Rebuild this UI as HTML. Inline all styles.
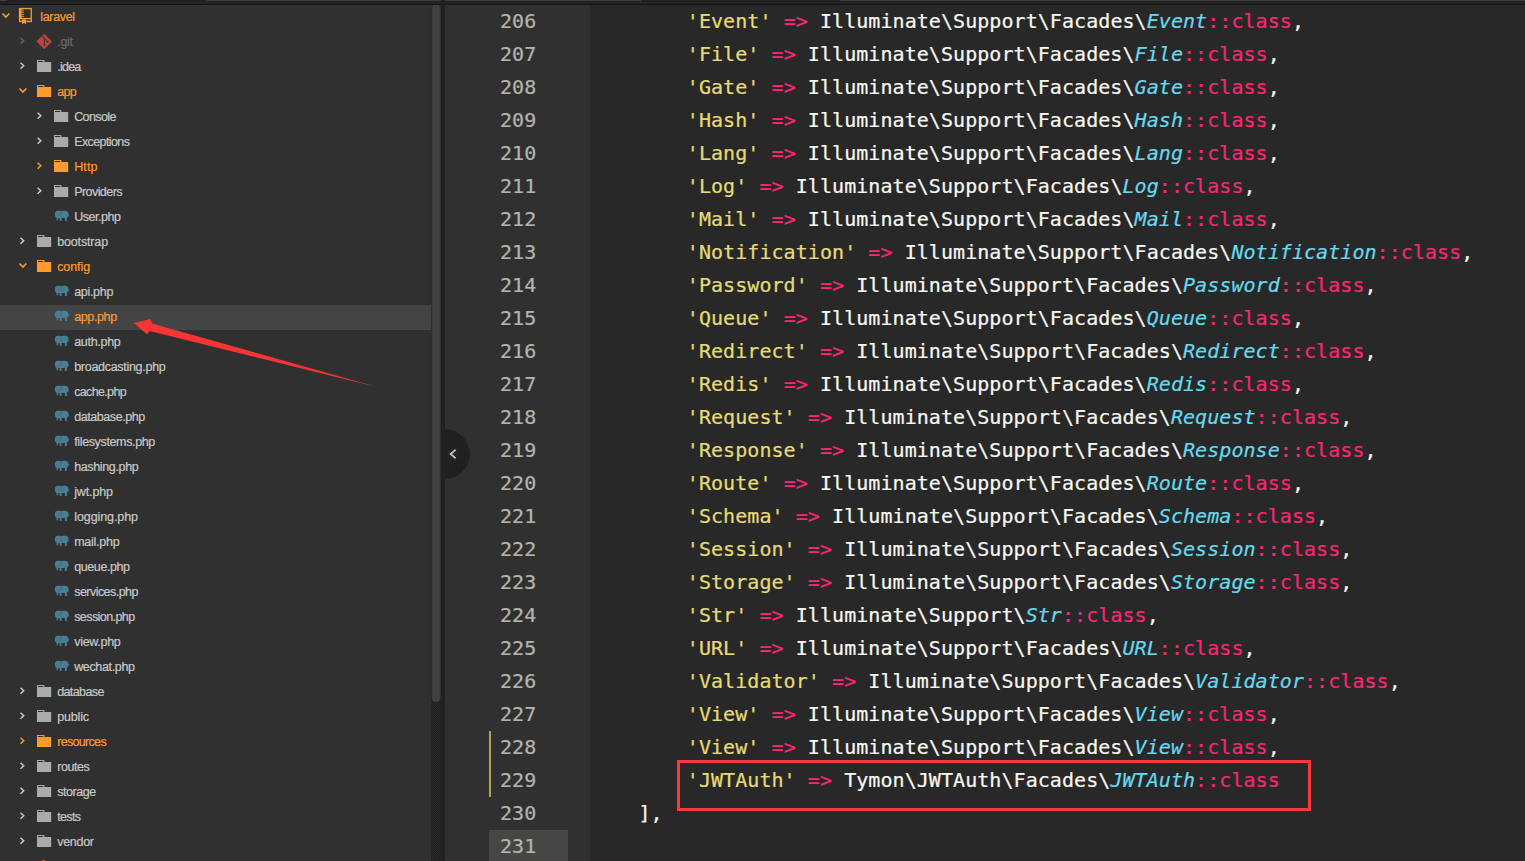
<!DOCTYPE html>
<html lang="en"><head><meta charset="utf-8"><title>app.php - laravel</title>
<style>
html,body{margin:0;padding:0;}
body{width:1525px;height:861px;overflow:hidden;background:#303030;position:relative;font-family:"Liberation Sans","DejaVu Sans",sans-serif;}
#top{position:absolute;left:0;top:0;width:1525px;height:5px;background:#212223;}
#top .a{position:absolute;top:0;height:1px;background:#3c3c3c;}
#top .d{position:absolute;top:2px;height:1px;background:repeating-linear-gradient(90deg,#2e2f30 0 1px,transparent 1px 4px);}
#top .b{position:absolute;left:0;top:4px;width:1525px;height:1px;background:#161616;}
#side{position:absolute;left:0;top:5px;width:431px;height:856px;background:#303030;}
#track{position:absolute;left:431px;top:5px;width:10px;height:856px;background:repeating-conic-gradient(#1d1e20 0% 25%, #2a2a2b 0% 50%) 0 0/2px 2px;}
#thumb{position:absolute;left:432px;top:5px;width:8px;height:697px;background:radial-gradient(circle at 2.5px 1px,#474745 0.5px,transparent 0.8px) 0 0/8px 4px, radial-gradient(circle at 5.5px 3px,#474745 0.5px,transparent 0.8px) 0 0/8px 4px, #40403e;border-radius:4px;}
#trackup{position:absolute;left:428px;top:5px;width:13px;height:693px;background:#2f2f2d;}
#div{position:absolute;left:441px;top:0;width:4px;height:861px;background:#202122;}
#gutter{position:absolute;left:445px;top:5px;width:145px;height:856px;background:#303030;}
#codebg{position:absolute;left:590px;top:5px;width:935px;height:856px;background:#282828;}
#hl{position:absolute;left:489px;top:830px;width:79px;height:31px;background:#464644;}
#mod{position:absolute;left:489px;top:731px;width:2px;height:66px;background:#a9a35c;}
.ln,.cl{position:absolute;height:33px;line-height:33px;font-family:"DejaVu Sans Mono", "Liberation Mono", monospace;font-size:20px;letter-spacing:0.06px;white-space:pre;margin-top:-0.5px;-webkit-text-stroke:0.22px;}
.ln{left:500px;color:#b4b4ae;}
.cl{left:590px;color:#f8f8f2;}
.s{color:#e6db74;} .k{color:#f92672;} .w{color:#f8f8f2;} .c{color:#66d9ef;font-style:italic;}
.t{position:absolute;height:25px;line-height:25px;font-size:12.5px;letter-spacing:-0.3px;white-space:pre;-webkit-text-stroke:0.2px;}
#box{position:absolute;left:677px;top:760px;width:628px;height:45px;border:3px solid #f83a3a;}
#ov{position:absolute;left:0;top:0;}
</style></head><body>
<div id="top"><div class="a" style="left:0;width:7px"></div><div class="a" style="left:207px;width:234px"></div><div class="a" style="left:445px;width:196px"></div><div class="a" style="left:840px;width:685px"></div><div class="d" style="left:9px;width:198px"></div><div class="d" style="left:641px;width:199px"></div><div class="b"></div></div>
<div id="side"></div>
<div id="track"></div><div id="trackup"></div><div id="thumb"></div>
<div id="div"></div>
<div id="gutter"></div><div id="codebg"></div>
<div id="hl"></div><div id="mod"></div>
<svg id="ov" width="1525" height="861" viewBox="0 0 1525 861">
<path d="M2.50 13.50 L5.90 17.00 L9.30 13.50" fill="none" stroke="#ff9a2c" stroke-width="1.6"/>
<g fill="none" stroke="#ff9a2c"><rect x="19.55" y="8.55" width="11.7" height="12.9" stroke-width="1.3"/><path d="M20.6 8.5 v10" stroke-width="2"/><path d="M19 18.6 h12.8" stroke-width="1.2"/><path d="M21.5 10.2 h2.4 M21.5 12.3 h2.4 M21.5 14.4 h2.4 M21.5 16.4 h2.4" stroke-width="0.9"/></g><path d="M22 19.4 h4 v4.9 l-2 -1.5 l-2 1.5 z" fill="#ff9a2c"/>
<path d="M20.50 37.70 L23.70 40.70 L20.50 43.70" fill="none" stroke="#606060" stroke-width="1.5"/>
<path d="M44.3 33.7 l7.8 7.8 l-7.8 7.8 l-7.8 -7.8 z" fill="#b94343"/><path d="M42.0 36.1 L47.5 41.6 M44.4 38.5 V44.9" stroke="#303030" stroke-width="0.9" fill="none"/><circle cx="47.5" cy="41.7" r="0.95" fill="#303030"/><circle cx="44.4" cy="44.9" r="0.95" fill="#303030"/><circle cx="44.1" cy="38.1" r="0.9" fill="#303030"/>
<path d="M20.50 62.70 L23.70 65.70 L20.50 68.70" fill="none" stroke="#c4c8cc" stroke-width="1.5"/>
<path d="M37.0 60.0 h7.4 v2 h6.8 v10 h-14.2 z" fill="#ababab"/><rect x="38.0" y="61.0" width="5.2" height="1" fill="#303030"/>
<path d="M19.50 88.50 L22.90 92.00 L26.30 88.50" fill="none" stroke="#ff9a2c" stroke-width="1.6"/>
<path d="M37.0 85.0 h7.4 v2 h6.8 v10 h-14.2 z" fill="#ff9a2c"/><rect x="38.0" y="86.0" width="5.2" height="1" fill="#303030"/>
<path d="M37.60 112.70 L40.80 115.70 L37.60 118.70" fill="none" stroke="#c4c8cc" stroke-width="1.5"/>
<path d="M54.0 110.0 h7.4 v2 h6.8 v10 h-14.2 z" fill="#ababab"/><rect x="55.0" y="111.0" width="5.2" height="1" fill="#303030"/>
<path d="M37.60 137.70 L40.80 140.70 L37.60 143.70" fill="none" stroke="#c4c8cc" stroke-width="1.5"/>
<path d="M54.0 135.0 h7.4 v2 h6.8 v10 h-14.2 z" fill="#ababab"/><rect x="55.0" y="136.0" width="5.2" height="1" fill="#303030"/>
<path d="M37.60 162.70 L40.80 165.70 L37.60 168.70" fill="none" stroke="#ff9a2c" stroke-width="1.5"/>
<path d="M54.0 160.0 h7.4 v2 h6.8 v10 h-14.2 z" fill="#ff9a2c"/><rect x="55.0" y="161.0" width="5.2" height="1" fill="#303030"/>
<path d="M37.60 187.70 L40.80 190.70 L37.60 193.70" fill="none" stroke="#c4c8cc" stroke-width="1.5"/>
<path d="M54.0 185.0 h7.4 v2 h6.8 v10 h-14.2 z" fill="#ababab"/><rect x="55.0" y="186.0" width="5.2" height="1" fill="#303030"/>
<path d="M54.80 214.30 C54.80 211.80 56.10 210.80 57.90 210.80 L60.00 210.80 C60.70 210.80 61.10 211.05 61.30 211.50 C61.50 211.05 62.20 210.80 63.60 210.80 L65.10 210.80 C67.40 210.80 68.80 212.80 68.80 215.10 C68.80 216.30 68.10 217.10 66.90 217.40 L66.90 221.00 L64.90 221.00 L64.90 218.00 L61.60 218.00 L61.60 221.00 L59.70 221.00 L59.70 218.20 L58.00 218.20 L58.00 220.10 C58.00 220.70 56.60 220.70 56.60 220.10 L56.60 218.00 C55.40 217.30 54.80 216.00 54.80 214.30 Z" fill="#487d94"/><path d="M61.30 211.30 V214.40 Q61.10 215.40 59.20 215.50" fill="none" stroke="#3b6478" stroke-width="0.7"/><rect x="56.30" y="214.20" width="0.9" height="0.9" fill="#3f6c82"/>
<path d="M20.50 237.70 L23.70 240.70 L20.50 243.70" fill="none" stroke="#c4c8cc" stroke-width="1.5"/>
<path d="M37.0 235.0 h7.4 v2 h6.8 v10 h-14.2 z" fill="#ababab"/><rect x="38.0" y="236.0" width="5.2" height="1" fill="#303030"/>
<path d="M19.50 263.50 L22.90 267.00 L26.30 263.50" fill="none" stroke="#ff9a2c" stroke-width="1.6"/>
<path d="M37.0 260.0 h7.4 v2 h6.8 v10 h-14.2 z" fill="#ff9a2c"/><rect x="38.0" y="261.0" width="5.2" height="1" fill="#303030"/>
<path d="M54.80 289.30 C54.80 286.80 56.10 285.80 57.90 285.80 L60.00 285.80 C60.70 285.80 61.10 286.05 61.30 286.50 C61.50 286.05 62.20 285.80 63.60 285.80 L65.10 285.80 C67.40 285.80 68.80 287.80 68.80 290.10 C68.80 291.30 68.10 292.10 66.90 292.40 L66.90 296.00 L64.90 296.00 L64.90 293.00 L61.60 293.00 L61.60 296.00 L59.70 296.00 L59.70 293.20 L58.00 293.20 L58.00 295.10 C58.00 295.70 56.60 295.70 56.60 295.10 L56.60 293.00 C55.40 292.30 54.80 291.00 54.80 289.30 Z" fill="#487d94"/><path d="M61.30 286.30 V289.40 Q61.10 290.40 59.20 290.50" fill="none" stroke="#3b6478" stroke-width="0.7"/><rect x="56.30" y="289.20" width="0.9" height="0.9" fill="#3f6c82"/>
<rect x="0" y="305.0" width="431" height="25" fill="#444444"/>
<path d="M54.80 314.30 C54.80 311.80 56.10 310.80 57.90 310.80 L60.00 310.80 C60.70 310.80 61.10 311.05 61.30 311.50 C61.50 311.05 62.20 310.80 63.60 310.80 L65.10 310.80 C67.40 310.80 68.80 312.80 68.80 315.10 C68.80 316.30 68.10 317.10 66.90 317.40 L66.90 321.00 L64.90 321.00 L64.90 318.00 L61.60 318.00 L61.60 321.00 L59.70 321.00 L59.70 318.20 L58.00 318.20 L58.00 320.10 C58.00 320.70 56.60 320.70 56.60 320.10 L56.60 318.00 C55.40 317.30 54.80 316.00 54.80 314.30 Z" fill="#487d94"/><path d="M61.30 311.30 V314.40 Q61.10 315.40 59.20 315.50" fill="none" stroke="#3b6478" stroke-width="0.7"/><rect x="56.30" y="314.20" width="0.9" height="0.9" fill="#3f6c82"/>
<path d="M54.80 339.30 C54.80 336.80 56.10 335.80 57.90 335.80 L60.00 335.80 C60.70 335.80 61.10 336.05 61.30 336.50 C61.50 336.05 62.20 335.80 63.60 335.80 L65.10 335.80 C67.40 335.80 68.80 337.80 68.80 340.10 C68.80 341.30 68.10 342.10 66.90 342.40 L66.90 346.00 L64.90 346.00 L64.90 343.00 L61.60 343.00 L61.60 346.00 L59.70 346.00 L59.70 343.20 L58.00 343.20 L58.00 345.10 C58.00 345.70 56.60 345.70 56.60 345.10 L56.60 343.00 C55.40 342.30 54.80 341.00 54.80 339.30 Z" fill="#487d94"/><path d="M61.30 336.30 V339.40 Q61.10 340.40 59.20 340.50" fill="none" stroke="#3b6478" stroke-width="0.7"/><rect x="56.30" y="339.20" width="0.9" height="0.9" fill="#3f6c82"/>
<path d="M54.80 364.30 C54.80 361.80 56.10 360.80 57.90 360.80 L60.00 360.80 C60.70 360.80 61.10 361.05 61.30 361.50 C61.50 361.05 62.20 360.80 63.60 360.80 L65.10 360.80 C67.40 360.80 68.80 362.80 68.80 365.10 C68.80 366.30 68.10 367.10 66.90 367.40 L66.90 371.00 L64.90 371.00 L64.90 368.00 L61.60 368.00 L61.60 371.00 L59.70 371.00 L59.70 368.20 L58.00 368.20 L58.00 370.10 C58.00 370.70 56.60 370.70 56.60 370.10 L56.60 368.00 C55.40 367.30 54.80 366.00 54.80 364.30 Z" fill="#487d94"/><path d="M61.30 361.30 V364.40 Q61.10 365.40 59.20 365.50" fill="none" stroke="#3b6478" stroke-width="0.7"/><rect x="56.30" y="364.20" width="0.9" height="0.9" fill="#3f6c82"/>
<path d="M54.80 389.30 C54.80 386.80 56.10 385.80 57.90 385.80 L60.00 385.80 C60.70 385.80 61.10 386.05 61.30 386.50 C61.50 386.05 62.20 385.80 63.60 385.80 L65.10 385.80 C67.40 385.80 68.80 387.80 68.80 390.10 C68.80 391.30 68.10 392.10 66.90 392.40 L66.90 396.00 L64.90 396.00 L64.90 393.00 L61.60 393.00 L61.60 396.00 L59.70 396.00 L59.70 393.20 L58.00 393.20 L58.00 395.10 C58.00 395.70 56.60 395.70 56.60 395.10 L56.60 393.00 C55.40 392.30 54.80 391.00 54.80 389.30 Z" fill="#487d94"/><path d="M61.30 386.30 V389.40 Q61.10 390.40 59.20 390.50" fill="none" stroke="#3b6478" stroke-width="0.7"/><rect x="56.30" y="389.20" width="0.9" height="0.9" fill="#3f6c82"/>
<path d="M54.80 414.30 C54.80 411.80 56.10 410.80 57.90 410.80 L60.00 410.80 C60.70 410.80 61.10 411.05 61.30 411.50 C61.50 411.05 62.20 410.80 63.60 410.80 L65.10 410.80 C67.40 410.80 68.80 412.80 68.80 415.10 C68.80 416.30 68.10 417.10 66.90 417.40 L66.90 421.00 L64.90 421.00 L64.90 418.00 L61.60 418.00 L61.60 421.00 L59.70 421.00 L59.70 418.20 L58.00 418.20 L58.00 420.10 C58.00 420.70 56.60 420.70 56.60 420.10 L56.60 418.00 C55.40 417.30 54.80 416.00 54.80 414.30 Z" fill="#487d94"/><path d="M61.30 411.30 V414.40 Q61.10 415.40 59.20 415.50" fill="none" stroke="#3b6478" stroke-width="0.7"/><rect x="56.30" y="414.20" width="0.9" height="0.9" fill="#3f6c82"/>
<path d="M54.80 439.30 C54.80 436.80 56.10 435.80 57.90 435.80 L60.00 435.80 C60.70 435.80 61.10 436.05 61.30 436.50 C61.50 436.05 62.20 435.80 63.60 435.80 L65.10 435.80 C67.40 435.80 68.80 437.80 68.80 440.10 C68.80 441.30 68.10 442.10 66.90 442.40 L66.90 446.00 L64.90 446.00 L64.90 443.00 L61.60 443.00 L61.60 446.00 L59.70 446.00 L59.70 443.20 L58.00 443.20 L58.00 445.10 C58.00 445.70 56.60 445.70 56.60 445.10 L56.60 443.00 C55.40 442.30 54.80 441.00 54.80 439.30 Z" fill="#487d94"/><path d="M61.30 436.30 V439.40 Q61.10 440.40 59.20 440.50" fill="none" stroke="#3b6478" stroke-width="0.7"/><rect x="56.30" y="439.20" width="0.9" height="0.9" fill="#3f6c82"/>
<path d="M54.80 464.30 C54.80 461.80 56.10 460.80 57.90 460.80 L60.00 460.80 C60.70 460.80 61.10 461.05 61.30 461.50 C61.50 461.05 62.20 460.80 63.60 460.80 L65.10 460.80 C67.40 460.80 68.80 462.80 68.80 465.10 C68.80 466.30 68.10 467.10 66.90 467.40 L66.90 471.00 L64.90 471.00 L64.90 468.00 L61.60 468.00 L61.60 471.00 L59.70 471.00 L59.70 468.20 L58.00 468.20 L58.00 470.10 C58.00 470.70 56.60 470.70 56.60 470.10 L56.60 468.00 C55.40 467.30 54.80 466.00 54.80 464.30 Z" fill="#487d94"/><path d="M61.30 461.30 V464.40 Q61.10 465.40 59.20 465.50" fill="none" stroke="#3b6478" stroke-width="0.7"/><rect x="56.30" y="464.20" width="0.9" height="0.9" fill="#3f6c82"/>
<path d="M54.80 489.30 C54.80 486.80 56.10 485.80 57.90 485.80 L60.00 485.80 C60.70 485.80 61.10 486.05 61.30 486.50 C61.50 486.05 62.20 485.80 63.60 485.80 L65.10 485.80 C67.40 485.80 68.80 487.80 68.80 490.10 C68.80 491.30 68.10 492.10 66.90 492.40 L66.90 496.00 L64.90 496.00 L64.90 493.00 L61.60 493.00 L61.60 496.00 L59.70 496.00 L59.70 493.20 L58.00 493.20 L58.00 495.10 C58.00 495.70 56.60 495.70 56.60 495.10 L56.60 493.00 C55.40 492.30 54.80 491.00 54.80 489.30 Z" fill="#487d94"/><path d="M61.30 486.30 V489.40 Q61.10 490.40 59.20 490.50" fill="none" stroke="#3b6478" stroke-width="0.7"/><rect x="56.30" y="489.20" width="0.9" height="0.9" fill="#3f6c82"/>
<path d="M54.80 514.30 C54.80 511.80 56.10 510.80 57.90 510.80 L60.00 510.80 C60.70 510.80 61.10 511.05 61.30 511.50 C61.50 511.05 62.20 510.80 63.60 510.80 L65.10 510.80 C67.40 510.80 68.80 512.80 68.80 515.10 C68.80 516.30 68.10 517.10 66.90 517.40 L66.90 521.00 L64.90 521.00 L64.90 518.00 L61.60 518.00 L61.60 521.00 L59.70 521.00 L59.70 518.20 L58.00 518.20 L58.00 520.10 C58.00 520.70 56.60 520.70 56.60 520.10 L56.60 518.00 C55.40 517.30 54.80 516.00 54.80 514.30 Z" fill="#487d94"/><path d="M61.30 511.30 V514.40 Q61.10 515.40 59.20 515.50" fill="none" stroke="#3b6478" stroke-width="0.7"/><rect x="56.30" y="514.20" width="0.9" height="0.9" fill="#3f6c82"/>
<path d="M54.80 539.30 C54.80 536.80 56.10 535.80 57.90 535.80 L60.00 535.80 C60.70 535.80 61.10 536.05 61.30 536.50 C61.50 536.05 62.20 535.80 63.60 535.80 L65.10 535.80 C67.40 535.80 68.80 537.80 68.80 540.10 C68.80 541.30 68.10 542.10 66.90 542.40 L66.90 546.00 L64.90 546.00 L64.90 543.00 L61.60 543.00 L61.60 546.00 L59.70 546.00 L59.70 543.20 L58.00 543.20 L58.00 545.10 C58.00 545.70 56.60 545.70 56.60 545.10 L56.60 543.00 C55.40 542.30 54.80 541.00 54.80 539.30 Z" fill="#487d94"/><path d="M61.30 536.30 V539.40 Q61.10 540.40 59.20 540.50" fill="none" stroke="#3b6478" stroke-width="0.7"/><rect x="56.30" y="539.20" width="0.9" height="0.9" fill="#3f6c82"/>
<path d="M54.80 564.30 C54.80 561.80 56.10 560.80 57.90 560.80 L60.00 560.80 C60.70 560.80 61.10 561.05 61.30 561.50 C61.50 561.05 62.20 560.80 63.60 560.80 L65.10 560.80 C67.40 560.80 68.80 562.80 68.80 565.10 C68.80 566.30 68.10 567.10 66.90 567.40 L66.90 571.00 L64.90 571.00 L64.90 568.00 L61.60 568.00 L61.60 571.00 L59.70 571.00 L59.70 568.20 L58.00 568.20 L58.00 570.10 C58.00 570.70 56.60 570.70 56.60 570.10 L56.60 568.00 C55.40 567.30 54.80 566.00 54.80 564.30 Z" fill="#487d94"/><path d="M61.30 561.30 V564.40 Q61.10 565.40 59.20 565.50" fill="none" stroke="#3b6478" stroke-width="0.7"/><rect x="56.30" y="564.20" width="0.9" height="0.9" fill="#3f6c82"/>
<path d="M54.80 589.30 C54.80 586.80 56.10 585.80 57.90 585.80 L60.00 585.80 C60.70 585.80 61.10 586.05 61.30 586.50 C61.50 586.05 62.20 585.80 63.60 585.80 L65.10 585.80 C67.40 585.80 68.80 587.80 68.80 590.10 C68.80 591.30 68.10 592.10 66.90 592.40 L66.90 596.00 L64.90 596.00 L64.90 593.00 L61.60 593.00 L61.60 596.00 L59.70 596.00 L59.70 593.20 L58.00 593.20 L58.00 595.10 C58.00 595.70 56.60 595.70 56.60 595.10 L56.60 593.00 C55.40 592.30 54.80 591.00 54.80 589.30 Z" fill="#487d94"/><path d="M61.30 586.30 V589.40 Q61.10 590.40 59.20 590.50" fill="none" stroke="#3b6478" stroke-width="0.7"/><rect x="56.30" y="589.20" width="0.9" height="0.9" fill="#3f6c82"/>
<path d="M54.80 614.30 C54.80 611.80 56.10 610.80 57.90 610.80 L60.00 610.80 C60.70 610.80 61.10 611.05 61.30 611.50 C61.50 611.05 62.20 610.80 63.60 610.80 L65.10 610.80 C67.40 610.80 68.80 612.80 68.80 615.10 C68.80 616.30 68.10 617.10 66.90 617.40 L66.90 621.00 L64.90 621.00 L64.90 618.00 L61.60 618.00 L61.60 621.00 L59.70 621.00 L59.70 618.20 L58.00 618.20 L58.00 620.10 C58.00 620.70 56.60 620.70 56.60 620.10 L56.60 618.00 C55.40 617.30 54.80 616.00 54.80 614.30 Z" fill="#487d94"/><path d="M61.30 611.30 V614.40 Q61.10 615.40 59.20 615.50" fill="none" stroke="#3b6478" stroke-width="0.7"/><rect x="56.30" y="614.20" width="0.9" height="0.9" fill="#3f6c82"/>
<path d="M54.80 639.30 C54.80 636.80 56.10 635.80 57.90 635.80 L60.00 635.80 C60.70 635.80 61.10 636.05 61.30 636.50 C61.50 636.05 62.20 635.80 63.60 635.80 L65.10 635.80 C67.40 635.80 68.80 637.80 68.80 640.10 C68.80 641.30 68.10 642.10 66.90 642.40 L66.90 646.00 L64.90 646.00 L64.90 643.00 L61.60 643.00 L61.60 646.00 L59.70 646.00 L59.70 643.20 L58.00 643.20 L58.00 645.10 C58.00 645.70 56.60 645.70 56.60 645.10 L56.60 643.00 C55.40 642.30 54.80 641.00 54.80 639.30 Z" fill="#487d94"/><path d="M61.30 636.30 V639.40 Q61.10 640.40 59.20 640.50" fill="none" stroke="#3b6478" stroke-width="0.7"/><rect x="56.30" y="639.20" width="0.9" height="0.9" fill="#3f6c82"/>
<path d="M54.80 664.30 C54.80 661.80 56.10 660.80 57.90 660.80 L60.00 660.80 C60.70 660.80 61.10 661.05 61.30 661.50 C61.50 661.05 62.20 660.80 63.60 660.80 L65.10 660.80 C67.40 660.80 68.80 662.80 68.80 665.10 C68.80 666.30 68.10 667.10 66.90 667.40 L66.90 671.00 L64.90 671.00 L64.90 668.00 L61.60 668.00 L61.60 671.00 L59.70 671.00 L59.70 668.20 L58.00 668.20 L58.00 670.10 C58.00 670.70 56.60 670.70 56.60 670.10 L56.60 668.00 C55.40 667.30 54.80 666.00 54.80 664.30 Z" fill="#487d94"/><path d="M61.30 661.30 V664.40 Q61.10 665.40 59.20 665.50" fill="none" stroke="#3b6478" stroke-width="0.7"/><rect x="56.30" y="664.20" width="0.9" height="0.9" fill="#3f6c82"/>
<path d="M20.50 687.70 L23.70 690.70 L20.50 693.70" fill="none" stroke="#c4c8cc" stroke-width="1.5"/>
<path d="M37.0 685.0 h7.4 v2 h6.8 v10 h-14.2 z" fill="#ababab"/><rect x="38.0" y="686.0" width="5.2" height="1" fill="#303030"/>
<path d="M20.50 712.70 L23.70 715.70 L20.50 718.70" fill="none" stroke="#c4c8cc" stroke-width="1.5"/>
<path d="M37.0 710.0 h7.4 v2 h6.8 v10 h-14.2 z" fill="#ababab"/><rect x="38.0" y="711.0" width="5.2" height="1" fill="#303030"/>
<path d="M20.50 737.70 L23.70 740.70 L20.50 743.70" fill="none" stroke="#ff9a2c" stroke-width="1.5"/>
<path d="M37.0 735.0 h7.4 v2 h6.8 v10 h-14.2 z" fill="#ff9a2c"/><rect x="38.0" y="736.0" width="5.2" height="1" fill="#303030"/>
<path d="M20.50 762.70 L23.70 765.70 L20.50 768.70" fill="none" stroke="#c4c8cc" stroke-width="1.5"/>
<path d="M37.0 760.0 h7.4 v2 h6.8 v10 h-14.2 z" fill="#ababab"/><rect x="38.0" y="761.0" width="5.2" height="1" fill="#303030"/>
<path d="M20.50 787.70 L23.70 790.70 L20.50 793.70" fill="none" stroke="#c4c8cc" stroke-width="1.5"/>
<path d="M37.0 785.0 h7.4 v2 h6.8 v10 h-14.2 z" fill="#ababab"/><rect x="38.0" y="786.0" width="5.2" height="1" fill="#303030"/>
<path d="M20.50 812.70 L23.70 815.70 L20.50 818.70" fill="none" stroke="#c4c8cc" stroke-width="1.5"/>
<path d="M37.0 810.0 h7.4 v2 h6.8 v10 h-14.2 z" fill="#ababab"/><rect x="38.0" y="811.0" width="5.2" height="1" fill="#303030"/>
<path d="M20.50 837.70 L23.70 840.70 L20.50 843.70" fill="none" stroke="#c4c8cc" stroke-width="1.5"/>
<path d="M37.0 835.0 h7.4 v2 h6.8 v10 h-14.2 z" fill="#ababab"/><rect x="38.0" y="836.0" width="5.2" height="1" fill="#303030"/>
<defs><pattern id="dots" width="4" height="4" patternUnits="userSpaceOnUse" x="442" y="431"><rect x="0" y="0" width="1" height="1" fill="#141516"/><rect x="2" y="2" width="1" height="1" fill="#141516"/></pattern></defs>
<path d="M445 429 A25 25 0 0 1 445 479 Z" fill="#212223"/><path d="M445 431 A23 23 0 0 1 445 477 Z" fill="url(#dots)"/><circle cx="453" cy="454" r="6.5" fill="#212223"/>
<path d="M455.6 449.8 L450.6 454 L455.6 458.2" fill="none" stroke="#bebebe" stroke-width="1.8"/>
<rect x="42" y="860" width="3" height="1" fill="#c4572e"/>
<polygon points="134,323 150.3,319 152,323.5 376,386.7 149.5,331 147,334.5" fill="#f83535"/>
</svg>
<div class="t" style="top:5.0px;left:40.3px;color:#ff9a2c;letter-spacing:-0.34px">laravel</div>
<div class="t" style="top:30.0px;left:57.2px;color:#6a6a6a;letter-spacing:-0.26px">.git</div>
<div class="t" style="top:55.0px;left:57.2px;color:#c9c9c9;letter-spacing:-0.75px">.idea</div>
<div class="t" style="top:80.0px;left:57.2px;color:#ff9a2c;letter-spacing:-0.70px">app</div>
<div class="t" style="top:105.0px;left:74.2px;color:#c9c9c9;letter-spacing:-0.59px">Console</div>
<div class="t" style="top:130.0px;left:74.2px;color:#c9c9c9;letter-spacing:-0.60px">Exceptions</div>
<div class="t" style="top:155.0px;left:74.2px;color:#ff9a2c;letter-spacing:0.15px">Http</div>
<div class="t" style="top:180.0px;left:74.2px;color:#c9c9c9;letter-spacing:-0.56px">Providers</div>
<div class="t" style="top:205.0px;left:74.2px;color:#c9c9c9;letter-spacing:-0.47px">User.php</div>
<div class="t" style="top:230.0px;left:57.2px;color:#c9c9c9;letter-spacing:-0.15px">bootstrap</div>
<div class="t" style="top:255.0px;left:57.2px;color:#ff9a2c;letter-spacing:-0.08px">config</div>
<div class="t" style="top:280.0px;left:74.2px;color:#c9c9c9;letter-spacing:-0.31px">api.php</div>
<div class="t" style="top:305.0px;left:74.2px;color:#ff9a2c;letter-spacing:-0.37px">app.php</div>
<div class="t" style="top:330.0px;left:74.2px;color:#c9c9c9;letter-spacing:-0.30px">auth.php</div>
<div class="t" style="top:355.0px;left:74.2px;color:#c9c9c9;letter-spacing:-0.29px">broadcasting.php</div>
<div class="t" style="top:380.0px;left:74.2px;color:#c9c9c9;letter-spacing:-0.65px">cache.php</div>
<div class="t" style="top:405.0px;left:74.2px;color:#c9c9c9;letter-spacing:-0.43px">database.php</div>
<div class="t" style="top:430.0px;left:74.2px;color:#c9c9c9;letter-spacing:-0.36px">filesystems.php</div>
<div class="t" style="top:455.0px;left:74.2px;color:#c9c9c9;letter-spacing:-0.36px">hashing.php</div>
<div class="t" style="top:480.0px;left:74.2px;color:#c9c9c9;letter-spacing:-0.14px">jwt.php</div>
<div class="t" style="top:505.0px;left:74.2px;color:#c9c9c9;letter-spacing:-0.08px">logging.php</div>
<div class="t" style="top:530.0px;left:74.2px;color:#c9c9c9;letter-spacing:-0.25px">mail.php</div>
<div class="t" style="top:555.0px;left:74.2px;color:#c9c9c9;letter-spacing:-0.40px">queue.php</div>
<div class="t" style="top:580.0px;left:74.2px;color:#c9c9c9;letter-spacing:-0.54px">services.php</div>
<div class="t" style="top:605.0px;left:74.2px;color:#c9c9c9;letter-spacing:-0.58px">session.php</div>
<div class="t" style="top:630.0px;left:74.2px;color:#c9c9c9;letter-spacing:-0.29px">view.php</div>
<div class="t" style="top:655.0px;left:74.2px;color:#c9c9c9;letter-spacing:-0.35px">wechat.php</div>
<div class="t" style="top:680.0px;left:57.2px;color:#c9c9c9;letter-spacing:-0.61px">database</div>
<div class="t" style="top:705.0px;left:57.2px;color:#c9c9c9;letter-spacing:-0.16px">public</div>
<div class="t" style="top:730.0px;left:57.2px;color:#ff9a2c;letter-spacing:-0.68px">resources</div>
<div class="t" style="top:755.0px;left:57.2px;color:#c9c9c9;letter-spacing:-0.44px">routes</div>
<div class="t" style="top:780.0px;left:57.2px;color:#c9c9c9;letter-spacing:-0.46px">storage</div>
<div class="t" style="top:805.0px;left:57.2px;color:#c9c9c9;letter-spacing:-0.65px">tests</div>
<div class="t" style="top:830.0px;left:57.2px;color:#c9c9c9;letter-spacing:-0.28px">vendor</div>
<div class="ln" style="top:5px">206</div>
<div class="ln" style="top:38px">207</div>
<div class="ln" style="top:71px">208</div>
<div class="ln" style="top:104px">209</div>
<div class="ln" style="top:137px">210</div>
<div class="ln" style="top:170px">211</div>
<div class="ln" style="top:203px">212</div>
<div class="ln" style="top:236px">213</div>
<div class="ln" style="top:269px">214</div>
<div class="ln" style="top:302px">215</div>
<div class="ln" style="top:335px">216</div>
<div class="ln" style="top:368px">217</div>
<div class="ln" style="top:401px">218</div>
<div class="ln" style="top:434px">219</div>
<div class="ln" style="top:467px">220</div>
<div class="ln" style="top:500px">221</div>
<div class="ln" style="top:533px">222</div>
<div class="ln" style="top:566px">223</div>
<div class="ln" style="top:599px">224</div>
<div class="ln" style="top:632px">225</div>
<div class="ln" style="top:665px">226</div>
<div class="ln" style="top:698px">227</div>
<div class="ln" style="top:731px">228</div>
<div class="ln" style="top:764px">229</div>
<div class="ln" style="top:797px">230</div>
<div class="ln" style="top:830px">231</div>
<div class="cl" style="top:5px">        <span class="s">'Event'</span> <span class="k">=&gt;</span> <span class="w">Illuminate\Support\Facades\</span><span class="c">Event</span><span class="k">::class</span><span class="w">,</span></div>
<div class="cl" style="top:38px">        <span class="s">'File'</span> <span class="k">=&gt;</span> <span class="w">Illuminate\Support\Facades\</span><span class="c">File</span><span class="k">::class</span><span class="w">,</span></div>
<div class="cl" style="top:71px">        <span class="s">'Gate'</span> <span class="k">=&gt;</span> <span class="w">Illuminate\Support\Facades\</span><span class="c">Gate</span><span class="k">::class</span><span class="w">,</span></div>
<div class="cl" style="top:104px">        <span class="s">'Hash'</span> <span class="k">=&gt;</span> <span class="w">Illuminate\Support\Facades\</span><span class="c">Hash</span><span class="k">::class</span><span class="w">,</span></div>
<div class="cl" style="top:137px">        <span class="s">'Lang'</span> <span class="k">=&gt;</span> <span class="w">Illuminate\Support\Facades\</span><span class="c">Lang</span><span class="k">::class</span><span class="w">,</span></div>
<div class="cl" style="top:170px">        <span class="s">'Log'</span> <span class="k">=&gt;</span> <span class="w">Illuminate\Support\Facades\</span><span class="c">Log</span><span class="k">::class</span><span class="w">,</span></div>
<div class="cl" style="top:203px">        <span class="s">'Mail'</span> <span class="k">=&gt;</span> <span class="w">Illuminate\Support\Facades\</span><span class="c">Mail</span><span class="k">::class</span><span class="w">,</span></div>
<div class="cl" style="top:236px">        <span class="s">'Notification'</span> <span class="k">=&gt;</span> <span class="w">Illuminate\Support\Facades\</span><span class="c">Notification</span><span class="k">::class</span><span class="w">,</span></div>
<div class="cl" style="top:269px">        <span class="s">'Password'</span> <span class="k">=&gt;</span> <span class="w">Illuminate\Support\Facades\</span><span class="c">Password</span><span class="k">::class</span><span class="w">,</span></div>
<div class="cl" style="top:302px">        <span class="s">'Queue'</span> <span class="k">=&gt;</span> <span class="w">Illuminate\Support\Facades\</span><span class="c">Queue</span><span class="k">::class</span><span class="w">,</span></div>
<div class="cl" style="top:335px">        <span class="s">'Redirect'</span> <span class="k">=&gt;</span> <span class="w">Illuminate\Support\Facades\</span><span class="c">Redirect</span><span class="k">::class</span><span class="w">,</span></div>
<div class="cl" style="top:368px">        <span class="s">'Redis'</span> <span class="k">=&gt;</span> <span class="w">Illuminate\Support\Facades\</span><span class="c">Redis</span><span class="k">::class</span><span class="w">,</span></div>
<div class="cl" style="top:401px">        <span class="s">'Request'</span> <span class="k">=&gt;</span> <span class="w">Illuminate\Support\Facades\</span><span class="c">Request</span><span class="k">::class</span><span class="w">,</span></div>
<div class="cl" style="top:434px">        <span class="s">'Response'</span> <span class="k">=&gt;</span> <span class="w">Illuminate\Support\Facades\</span><span class="c">Response</span><span class="k">::class</span><span class="w">,</span></div>
<div class="cl" style="top:467px">        <span class="s">'Route'</span> <span class="k">=&gt;</span> <span class="w">Illuminate\Support\Facades\</span><span class="c">Route</span><span class="k">::class</span><span class="w">,</span></div>
<div class="cl" style="top:500px">        <span class="s">'Schema'</span> <span class="k">=&gt;</span> <span class="w">Illuminate\Support\Facades\</span><span class="c">Schema</span><span class="k">::class</span><span class="w">,</span></div>
<div class="cl" style="top:533px">        <span class="s">'Session'</span> <span class="k">=&gt;</span> <span class="w">Illuminate\Support\Facades\</span><span class="c">Session</span><span class="k">::class</span><span class="w">,</span></div>
<div class="cl" style="top:566px">        <span class="s">'Storage'</span> <span class="k">=&gt;</span> <span class="w">Illuminate\Support\Facades\</span><span class="c">Storage</span><span class="k">::class</span><span class="w">,</span></div>
<div class="cl" style="top:599px">        <span class="s">'Str'</span> <span class="k">=&gt;</span> <span class="w">Illuminate\Support\</span><span class="c">Str</span><span class="k">::class</span><span class="w">,</span></div>
<div class="cl" style="top:632px">        <span class="s">'URL'</span> <span class="k">=&gt;</span> <span class="w">Illuminate\Support\Facades\</span><span class="c">URL</span><span class="k">::class</span><span class="w">,</span></div>
<div class="cl" style="top:665px">        <span class="s">'Validator'</span> <span class="k">=&gt;</span> <span class="w">Illuminate\Support\Facades\</span><span class="c">Validator</span><span class="k">::class</span><span class="w">,</span></div>
<div class="cl" style="top:698px">        <span class="s">'View'</span> <span class="k">=&gt;</span> <span class="w">Illuminate\Support\Facades\</span><span class="c">View</span><span class="k">::class</span><span class="w">,</span></div>
<div class="cl" style="top:731px">        <span class="s">'View'</span> <span class="k">=&gt;</span> <span class="w">Illuminate\Support\Facades\</span><span class="c">View</span><span class="k">::class</span><span class="w">,</span></div>
<div class="cl" style="top:764px">        <span class="s">'JWTAuth'</span> <span class="k">=&gt;</span> <span class="w">Tymon\JWTAuth\Facades\</span><span class="c">JWTAuth</span><span class="k">::class</span></div>
<div class="cl" style="top:797px">    <span class="w">],</span></div>
<div class="cl" style="top:830px"></div>
<div id="box"></div>
</body></html>
